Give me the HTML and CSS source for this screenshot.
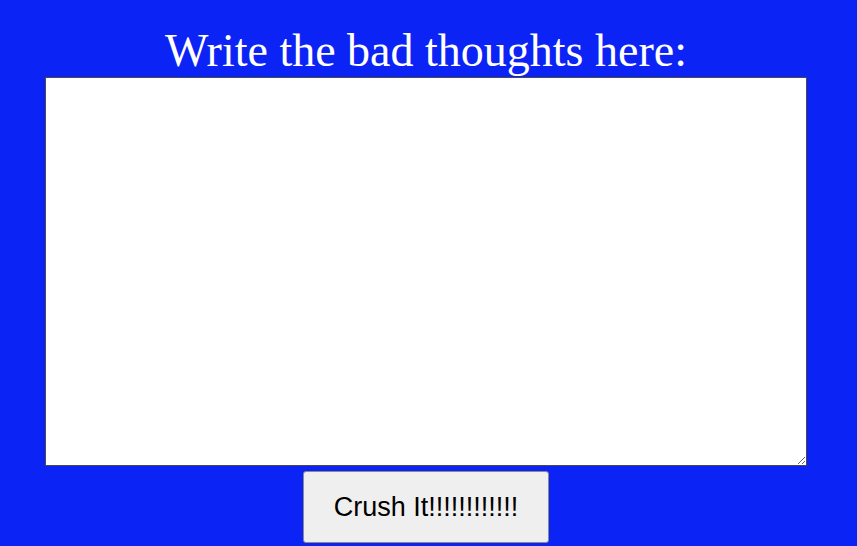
FILE: index.html
```html
<!DOCTYPE html>
<html>
<head>
<meta charset="utf-8">
<link rel="stylesheet" href="styles.css">
</head>
<body>
<main class="page">
  <h1 class="title">Write the bad thoughts here:</h1>
  <textarea class="thoughts"></textarea>
  <button class="crush">Crush It!!!!!!!!!!!!</button>
</main>
</body>
</html>
```
FILE: styles.css
```css
html, body {
  margin: 0;
  padding: 0;
  background: #0c23f5;
  height: 100%;
  overflow: hidden;
}
.page {
  display: flex;
  flex-direction: column;
  align-items: center;
  padding: 26px 5px 0 0;
}
.title {
  margin: 0 0 1px 0;
  font-family: "Liberation Serif", "Times New Roman", serif;
  font-weight: normal;
  font-size: 46px;
  line-height: 50px;
  color: #ffffff;
}
.thoughts {
  box-sizing: border-box;
  width: 762px;
  height: 389px;
  margin: 0;
  border: 1px solid #4a4a4a;
  background: #ffffff;
  padding: 2px;
  resize: both;
}
.crush {
  box-sizing: border-box;
  margin-top: 5px;
  width: 246px;
  height: 72px;
  background: #efefef;
  border: 1px solid #8a8a8a;
  border-radius: 3px;
  font-family: "Liberation Sans", Arial, sans-serif;
  font-size: 27px;
  color: #000000;
  padding: 0;
}
```
